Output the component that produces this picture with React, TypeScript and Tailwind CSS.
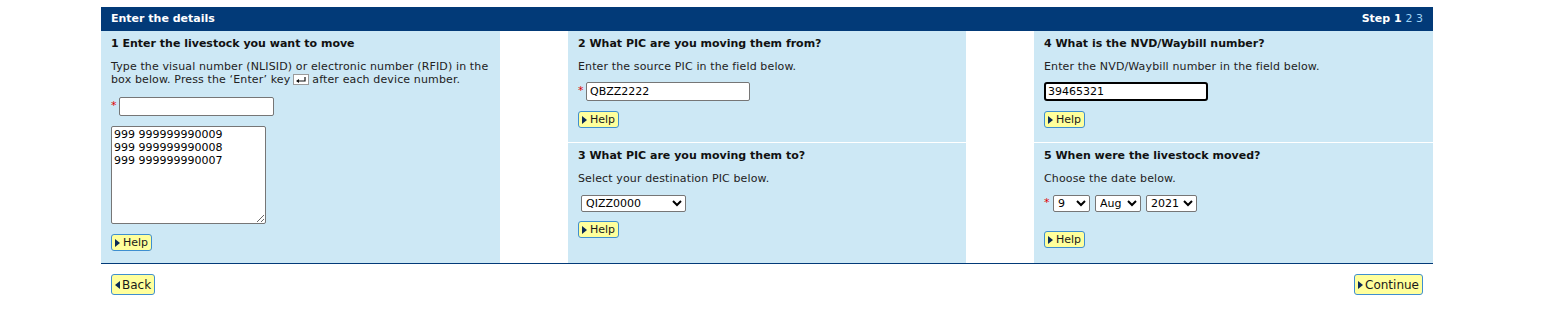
import { ReactNode } from "react";

function Tri({ dir = "right" }: { dir?: "right" | "left" }) {
  return (
    <svg width="5" height="8" viewBox="0 0 5 8" className="shrink-0">
      {dir === "right" ? <path d="M0 0 L5 4 L0 8 Z" fill="#0b2a55" /> : <path d="M5 0 L0 4 L5 8 Z" fill="#0b2a55" />}
    </svg>
  );
}

function HelpButton() {
  return (
    <button className="flex h-[17px] items-center gap-[3px] rounded-[3px] border border-[#3f8fd0] bg-[#ffff9c] pl-[3px] pr-[3px] text-[11px] leading-none text-[#1a1a1a]">
      <Tri />
      Help
    </button>
  );
}

function NavButton({ children, dir }: { children: ReactNode; dir: "left" | "right" }) {
  return (
    <button className="flex h-[21px] items-center gap-[2px] rounded-[3px] border border-[#3f8fd0] bg-[#ffff9c] pl-[3px] pr-[3px] text-[12px] leading-none text-[#1a1a1a]">
      <Tri dir={dir} />
      {children}
    </button>
  );
}

function Star() {
  return <span className="w-[8px] text-[11px] text-[#e00000]">*</span>;
}

function EnterKey() {
  return (
    <svg width="16" height="11" viewBox="0 0 16 11" className="mx-[3px] inline-block align-[-2px]">
      <rect x="0.5" y="0.5" width="15" height="10" fill="#fff" stroke="#9a9a9a" />
      <path d="M12 3 V7 H4" fill="none" stroke="#111" strokeWidth="1.2" />
      <path d="M3 7 L6 5 L6 9 Z" fill="#111" />
    </svg>
  );
}

function Heading({ children }: { children: ReactNode }) {
  return <h3 className="text-[11px] font-bold leading-[13px] text-[#111]">{children}</h3>;
}

function Desc({ children }: { children: ReactNode }) {
  return <p className="text-[11px] leading-[13px] tracking-[0.13px] text-[#222]">{children}</p>;
}

export default function App() {
  return (
    <div className="h-[315px] w-[1541px] bg-white pt-[7px] font-['DejaVu_Sans',Verdana,sans-serif]">
      <div className="ml-[101px] w-[1332px]">
        <div className="flex h-[24px] items-center justify-between bg-[#023a78] px-[10px] text-[11px] font-bold text-white">
          <span>Enter the details</span>
          <span>
            Step 1 <span className="font-normal text-[#9fd4f7]">2 3</span>
          </span>
        </div>

        <div className="grid h-[233px] grid-cols-[399px_68px_398px_68px_399px] border-b border-[#023a78]">
          <div className="flex flex-col bg-[#cde8f5] px-[10px] pt-[6px]">
            <Heading>1 Enter the livestock you want to move</Heading>
            <div className="mt-[10px]">
              <Desc>
                Type the visual number (NLISID) or electronic number (RFID) in the box below. Press the ‘Enter’ key
                <EnterKey />
                after each device number.
              </Desc>
            </div>
            <div className="mt-[11px] flex items-center">
              <Star />
              <input className="h-[19px] w-[155px] rounded-[2px] border border-[#767676] bg-white px-[3px] text-[11px]" />
            </div>
            <textarea
              readOnly
              defaultValue={"999 999999990009\n999 999999990008\n999 999999990007"}
              className="mt-[10px] h-[98px] w-[155px] rounded-[2px] border border-[#767676] bg-white px-[2px] py-[1px] text-[11px] leading-[13px] text-black"
            />
            <div className="mt-[10px]">
              <HelpButton />
            </div>
          </div>

          <div className="bg-white" />

          <div className="flex flex-col gap-[1px] bg-white">
            <div className="flex h-[111px] flex-col bg-[#cde8f5] px-[10px] pt-[6px]">
              <Heading>2 What PIC are you moving them from?</Heading>
              <div className="mt-[10px]">
                <Desc>Enter the source PIC in the field below.</Desc>
              </div>
              <div className="mt-[9px] flex items-center">
                <Star />
                <input
                  readOnly
                  value="QBZZ2222"
                  className="h-[19px] w-[164px] rounded-[2px] border border-[#767676] bg-white px-[3px] text-[11px] text-black"
                />
              </div>
              <div className="mt-[10px]">
                <HelpButton />
              </div>
            </div>
            <div className="flex flex-1 flex-col bg-[#cde8f5] px-[10px] pt-[6px]">
              <Heading>3 What PIC are you moving them to?</Heading>
              <div className="mt-[10px]">
                <Desc>Select your destination PIC below.</Desc>
              </div>
              <div className="mt-[10px] flex items-center pl-[3px]">
                <select
                  defaultValue="QIZZ0000"
                  className="h-[17px] w-[105px] rounded-[2px] border border-[#767676] bg-white text-[11px] text-black"
                >
                  <option>QIZZ0000</option>
                </select>
              </div>
              <div className="mt-[9px]">
                <HelpButton />
              </div>
            </div>
          </div>

          <div className="bg-white" />

          <div className="flex flex-col gap-[1px] bg-white">
            <div className="flex h-[111px] flex-col bg-[#cde8f5] px-[10px] pt-[6px]">
              <Heading>4 What is the NVD/Waybill number?</Heading>
              <div className="mt-[10px]">
                <Desc>Enter the NVD/Waybill number in the field below.</Desc>
              </div>
              <div className="mt-[9px] flex items-center">
                <input
                  readOnly
                  value="39465321"
                  className="h-[19px] w-[164px] rounded-[3px] border-2 border-black bg-white px-[2px] text-[11px] text-black"
                />
              </div>
              <div className="mt-[10px]">
                <HelpButton />
              </div>
            </div>
            <div className="flex flex-1 flex-col bg-[#cde8f5] px-[10px] pt-[6px]">
              <Heading>5 When were the livestock moved?</Heading>
              <div className="mt-[10px]">
                <Desc>Choose the date below.</Desc>
              </div>
              <div className="mt-[10px] flex items-center gap-[5px]">
                <span className="-mr-[5px] w-[9px] text-[11px] text-[#e00000]">*</span>
                <select defaultValue="9" className="h-[17px] w-[37px] rounded-[2px] border border-[#767676] bg-white text-[11px] text-black">
                  <option>9</option>
                </select>
                <select defaultValue="Aug" className="h-[17px] w-[46px] rounded-[2px] border border-[#767676] bg-white text-[11px] text-black">
                  <option>Aug</option>
                </select>
                <select defaultValue="2021" className="h-[17px] w-[51px] rounded-[2px] border border-[#767676] bg-white text-[11px] text-black">
                  <option>2021</option>
                </select>
              </div>
              <div className="mt-[19px]">
                <HelpButton />
              </div>
            </div>
          </div>
        </div>

        <div className="flex justify-between px-[10px] pt-[10px]">
          <NavButton dir="left">Back</NavButton>
          <NavButton dir="right">Continue</NavButton>
        </div>
      </div>
    </div>
  );
}
